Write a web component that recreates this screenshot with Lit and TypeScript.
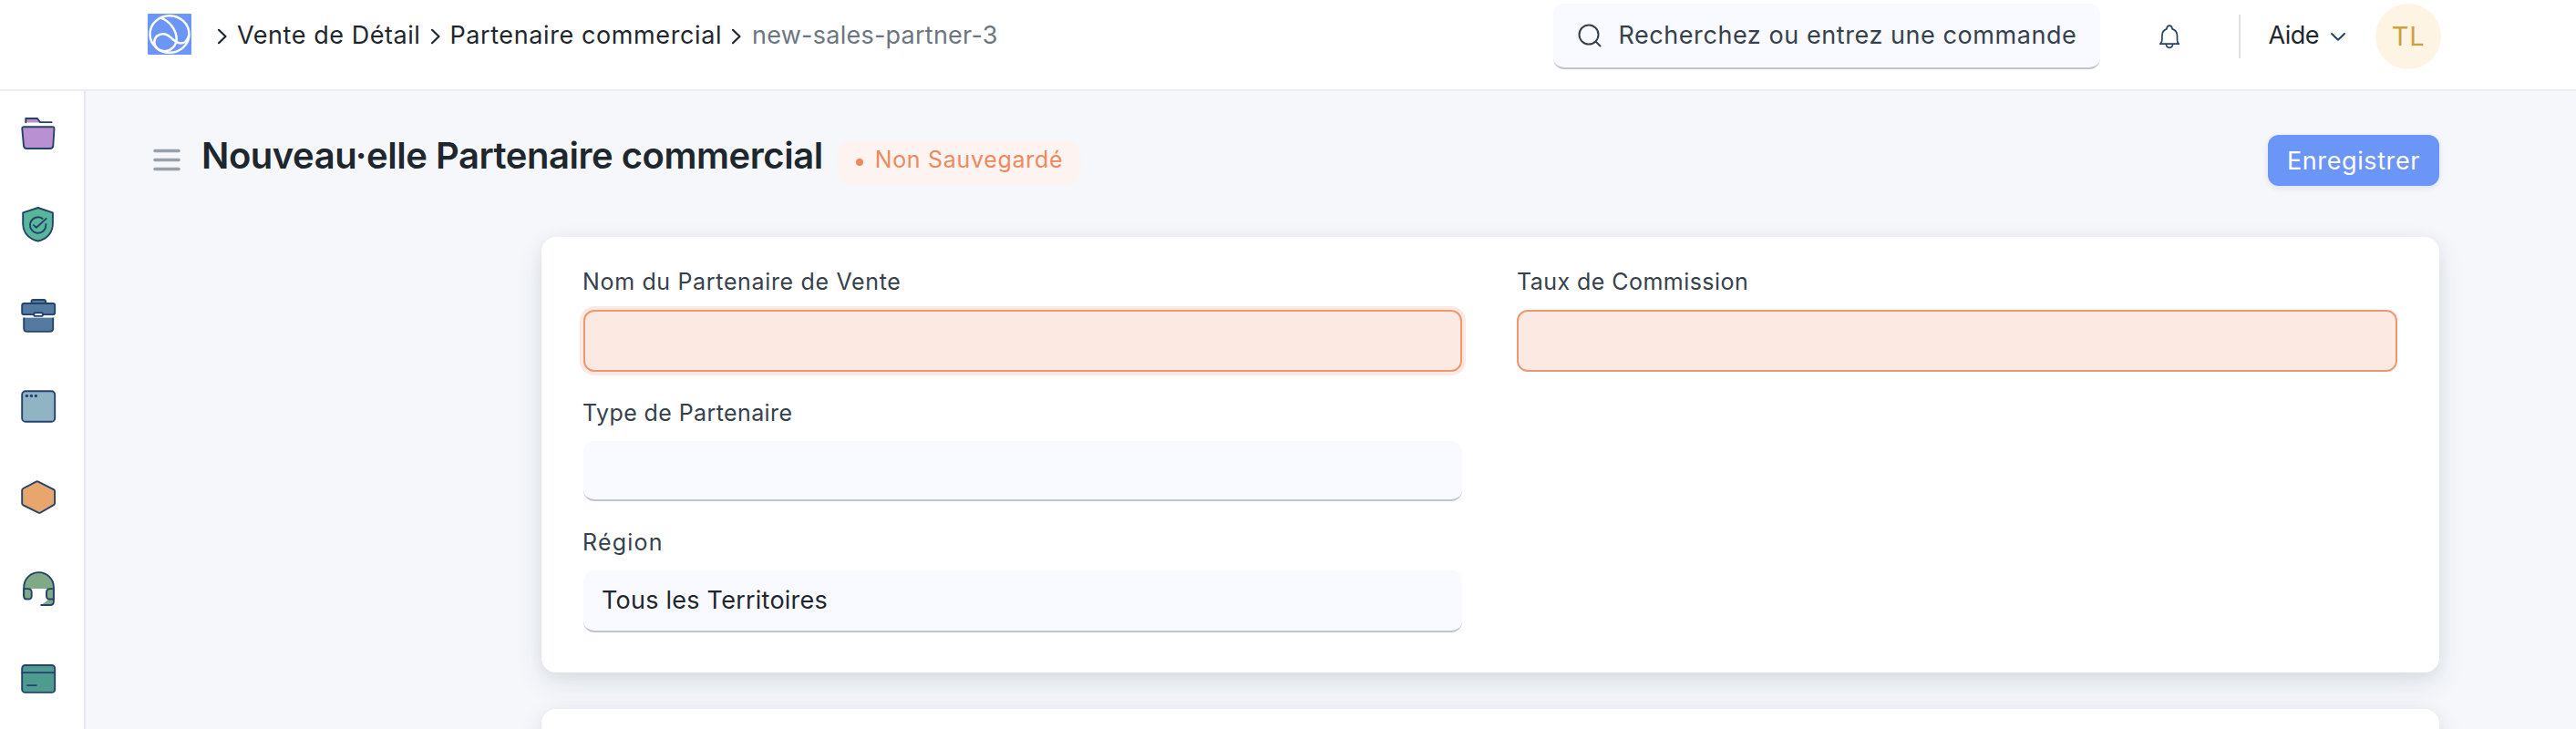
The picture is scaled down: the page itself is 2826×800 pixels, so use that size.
import { LitElement, html, css, svg } from 'lit';
import { customElement, property } from 'lit/decorators.js';
import { classMap } from 'lit/directives/class-map.js';

const crumbArrow = html`<svg class="crumb-arrow" width="12" height="18" viewBox="0 0 12 18"><path d="M2 1.8 9.5 9 2 16.2" /></svg>`;

const moduleIcons = [
  svg`<path fill="#b991d2" stroke="none" d="M6.3 8.5V4H19l3 4.5z"/><path fill="none" d="M6.3 8.6V4H19l3 4.2h12.6"/>
    <path stroke="none" fill="#fff" d="M3 9.200h34v3H3z"/>
    <path fill="#b991d2" d="M4.2 13.2h31.4q2 0 1.9 2l-1.2 18.6q-.3 3.2-3.4 3.2H7.4q-3.100 0-3.400-3.200L2.300 15.200q-.1-2 1.900-2z"/>`,
  svg`<path fill="#58b79b" d="M19.700 2 35.900 7.300V20c0 9.500-6.800 16.500-16.200 18.500C10.300 36.500 3.200 29.500 3.200 20V7.300z"/>
    <path fill="none" d="M24.600 13.900A8.700 8.700 0 1 0 28.300 20M14.900 21.100l3 2.700L28.700 13.900"/>`,
  svg`<path fill="#557a9f" d="M12.500 6.500V5q0-2 2-2h11.600q2 0 2 2v1.500"/>
    <rect fill="#557a9f" x="2.200" y="7" width="36" height="12.300" rx="2.200"/>
    <path fill="#557a9f" d="M4.200 22.300v12q0 3.600 3.600 3.600h24.800q3.600 0 3.600-3.600v-12" />
    <path stroke="none" fill="#fff" d="M3 20.200h34.500v2.200H3z"/>
    <rect fill="#fff" x="15.200" y="17.300" width="9.800" height="3.600" rx="1.600"/>`,
  svg`<rect fill="#91b4c4" x="2.200" y="3.200" width="36" height="33.600" rx="3.800"/>
    <g fill="#24426b" stroke="none"><circle cx="7.400" cy="8.400" r="1.700"/><circle cx="12.400" cy="8.400" r="1.700"/><circle cx="17.400" cy="8.400" r="1.700"/></g>`,
  svg`<path fill="#e8a56c" d="M17.600 2.600q1.200-.6 2.400 0L36.800 11.200q1.300.7 1.300 2V26.100q0 1.300-1.200 2L22.600 36.500q-1.200.7-2.400.1L3.500 28.300q-1.300-.7-1.300-2V12q0-1.300 1.300-2z"/>`,
  svg`<path fill="#80aa86" stroke="none" d="M4.200 20V18.500a16.300 16.300 0 0 1 32.700 0V20z"/>
    <path fill="#80aa86" stroke="none" d="M23.500 38 31 32h6v3q0 3-3 3z"/>
    <path fill="none" d="M4.200 28V18.500a16.300 16.300 0 0 1 32.700 0V34q0 4-4 4h-9.700"/>
    <path fill="#80aa86" d="M4.200 20.100h4.600q3.900 0 3.900 3.900v4q0 3.500-3.500 3.500H7.200q-3 0-3-3zM36.900 20.100h-4q-3.900 0-3.900 3.900v4q0 3.500 3.500 3.500h4.400z"/>`,
  svg`<rect fill="#4f9b90" x="2.200" y="4" width="36" height="29.900" rx="3.500"/><path fill="none" d="M2.200 12.100h36M8 26.100h9.800"/>`,
];

@customElement('form-field')
class FormField extends LitElement {
  @property() label = '';
  @property() value = '';
  @property({ type: Boolean }) required = false;
  @property({ type: Boolean }) active = false;

  static styles = css`
    :host { display: block; }
    .label {
      height: 30px; line-height: 30px; margin-bottom: 16px;
      font-size: 25px; color: #36414c; white-space: nowrap;
      letter-spacing: var(--label-tracking, 0.5px);
      text-indent: var(--label-indent, -1px);
    }
    .control {
      box-sizing: border-box; height: var(--control-height, 68px); padding: 0 20px;
      border-radius: 12px; background: #f9faff; border-bottom: 2px solid #c1c5ca;
      font-size: 27px; line-height: 65px; color: #1f272e; letter-spacing: 0.24px; white-space: nowrap;
    }
    .required { background: #fceae2; border: 2px solid #ec9973; }
    .active { box-shadow: 0 0 0 4px #fceae2; }
  `;

  render() {
    return html`
      <div class="label">${this.label}</div>
      <div class=${classMap({ control: true, required: this.required, active: this.active })}>${this.value}</div>
    `;
  }
}

@customElement('app-root')
class AppRoot extends LitElement {
  static styles = css`
    :host {
      display: flex; flex-direction: column; height: 800px; overflow: hidden;
      font-family: Inter, "Noto Sans", sans-serif; font-size: 27px; color: #1f272e; background: #f5f7fb;
    }
    svg { display: block; flex: none; }
    .topbar {
      box-sizing: border-box; flex: none; height: 100px; padding: 4px 148px 0 162px;
      display: flex; align-items: flex-start; justify-content: space-between;
      background: #fff; border-bottom: 2px solid #ebeef1; white-space: nowrap;
    }
    .crumbs { display: flex; align-items: center; height: 69px; }
    .logo { margin: -3px 28px 0 0; }
    .crumb-arrow { margin-top: 3px; fill: none; stroke: #1f272e; stroke-width: 2.2; stroke-linecap: round; stroke-linejoin: round; }
    .crumb { line-height: 36px; }
    .c1 { margin: 0 11px 0 10px; letter-spacing: 0.55px; }
    .c2 { margin: 0 10px 0 9px; letter-spacing: 0.6px; }
    .c3 { margin-left: 11px; letter-spacing: 0.24px; color: #6c7680; }
    .tools { display: flex; align-items: flex-start; height: 72px; }
    .search {
      box-sizing: border-box; width: 600px; height: 72px; padding: 0 0 0 27px;
      display: flex; align-items: center; background: #f9faff; border-bottom: 2px solid #c1c5ca;
      border-radius: 12px; color: #36414c; letter-spacing: 0.57px; line-height: 68px;
    }
    .search span { margin: -1px 0 0 18px; }
    .bell { margin: 22px 64px 0 64px; }
    .divider { width: 2px; height: 48px; margin-top: 12px; background: #dce0e5; }
    .help { margin: 0 0 0 30px; line-height: 69px; letter-spacing: -0.5px; }
    .caret { margin: 31px 32px 0 12px; }
    .avatar {
      width: 72px; height: 72px; border-radius: 50%; background: #fdf4e4; color: #d09f3e;
      text-align: center; line-height: 71px; font-size: 29px; letter-spacing: 0.8px;
    }
    .below { flex: 1; display: flex; min-height: 0; }
    .rail {
      box-sizing: border-box; width: 94px; padding: 26px 0 0 22px; flex: none;
      display: flex; flex-direction: column; gap: 60px; background: #fff; border-right: 2px solid #e5e8f0;
    }
    .rail svg { stroke: #24426b; stroke-width: 1.9; stroke-linecap: round; stroke-linejoin: round; }
    .page { flex: 1; padding: 48px 150px 0 75px; }
    .head { display: flex; align-items: flex-start; height: 112px; white-space: nowrap; }
    .menu { margin: 15px 23px 0 -1px; }
    h1 { margin: 1px 0 0; font-size: 40px; font-weight: 600; line-height: 44px; letter-spacing: -0.47px; }
    .badge {
      box-sizing: border-box; width: 266px; height: 48px; margin: 5.500px 0 0 16px; padding-left: 20px;
      display: flex; align-items: center; gap: 13px; border-radius: 14px;
      background: #fdf4f1; color: #ec8a5e; font-size: 25px; letter-spacing: 0.7px; line-height: 44px;
    }
    .dot { width: 8px; height: 8px; border-radius: 50%; background: #ec8a5e; margin-top: 1px; }
    .badge span { margin-top: -5px; }
    .save {
      width: 188px; height: 56px; margin-left: auto; border-radius: 12px; background: #6c95f8; color: #fff;
      text-align: center; line-height: 57px; letter-spacing: 0.6px; box-shadow: 0 2px 6px rgba(40, 55, 80, 0.12);
    }
    .card {
      box-sizing: border-box; margin-left: 425px; height: 478px; padding: 34px 46px 0;
      border-radius: 16px; background: #fff;
      box-shadow: 0 12px 30px rgba(40, 56, 66, 0.11), 0 2px 16px rgba(40, 52, 66, 0.05);
    }
    .card + .card { margin-top: 40px; }
    .cols { display: grid; grid-template-columns: 964px 966px; column-gap: 60px; }
    .col { display: flex; flex-direction: column; }
    .name { --label-tracking: 0.66px; }
    .rate { --label-tracking: 0.45px; --label-indent: 0; }
    .type { --label-tracking: 0.4px; --label-indent: -1px; --control-height: 66px; margin-top: 30px; }
    .region { --label-tracking: 1.2px; margin-top: 30px; }
  `;

  render() {
    return html`
      <header class="topbar">
        <nav class="crumbs">
          <svg class="logo" width="48" height="45" viewBox="0 0 48 45">
            <rect width="48" height="45" rx="1" fill="#6c95f8" />
            <g fill="none" stroke="#fff" stroke-width="2.5" stroke-linecap="round">
              <ellipse cx="24" cy="22.500" rx="21.500" ry="20.300" />
              <path d="M14.800 4.900C24 8 31.500 18 31.700 27.500C31.500 36 25 41 19 41.300C11.500 41.500 7.300 36 7.300 31C7.500 25.500 12 22.200 17 22.200C25.500 22.200 28 32.500 36.500 32.500C40.500 32.500 43.500 29.500 45 24.500" />
            </g>
          </svg>
          ${crumbArrow}<span class="crumb c1">Vente de Détail</span>
          ${crumbArrow}<span class="crumb c2">Partenaire commercial</span>
          ${crumbArrow}<span class="crumb c3">new-sales-partner-3</span>
        </nav>
        <div class="tools">
          <div class="search">
            <svg width="26" height="26" viewBox="0 0 26 26" fill="none" stroke="#36414c" stroke-width="2" stroke-linecap="round">
              <circle cx="12" cy="12" r="10.500" /><path d="m19.500 19.500 5 5" />
            </svg>
            <span>Recherchez ou entrez une commande</span>
          </div>
          <svg class="bell" width="24" height="28" viewBox="0 0 24 28" fill="none" stroke="#24426b" stroke-width="1.700" stroke-linecap="round" stroke-linejoin="round">
            <path d="M1.800 22.200H22.200C20.800 21 20.500 19.500 20.500 17.500V13.500C20.500 9.500 18.500 7 15.200 5.900C14.800 3.500 13.900 2.200 12 2.200S9.200 3.500 8.800 5.900C5.500 7 3.900 9.500 3.900 13.500V17.500C3.900 19.500 3.200 21 1.800 22.200zM8.300 22.500Q8.800 26.300 12 26.300T15.700 22.500" />
          </svg>
          <div class="divider"></div>
          <span class="help">Aide</span>
          <svg class="caret" width="18" height="12" viewBox="0 0 18 12" fill="none" stroke="#24426b" stroke-width="2" stroke-linecap="round" stroke-linejoin="round">
            <path d="M2 2 9 8.800 16 2" />
          </svg>
          <div class="avatar">TL</div>
        </div>
      </header>
      <div class="below">
        <aside class="rail">
          ${moduleIcons.map((icon) => html`<svg width="40" height="40" viewBox="0 0 40 40">${icon}</svg>`)}
        </aside>
        <main class="page">
          <div class="head">
            <svg class="menu" width="30" height="26" viewBox="0 0 30 26" stroke="#98a1a9" stroke-width="3.600" stroke-linecap="round">
              <path d="M2 2.500h26M2 12.500h26M2 22.500h26" />
            </svg>
            <h1>Nouveau·elle Partenaire commercial</h1>
            <div class="badge"><i class="dot"></i><span>Non Sauvegardé</span></div>
            <div class="save">Enregistrer</div>
          </div>
          <section class="card">
            <div class="cols">
              <div class="col">
                <form-field class="name" label="Nom du Partenaire de Vente" required active></form-field>
                <form-field class="type" label="Type de Partenaire"></form-field>
                <form-field class="region" label="Région" value="Tous les Territoires"></form-field>
              </div>
              <div class="col">
                <form-field class="rate" label="Taux de Commission" required></form-field>
              </div>
            </div>
          </section>
          <section class="card"></section>
        </main>
      </div>
    `;
  }
}
